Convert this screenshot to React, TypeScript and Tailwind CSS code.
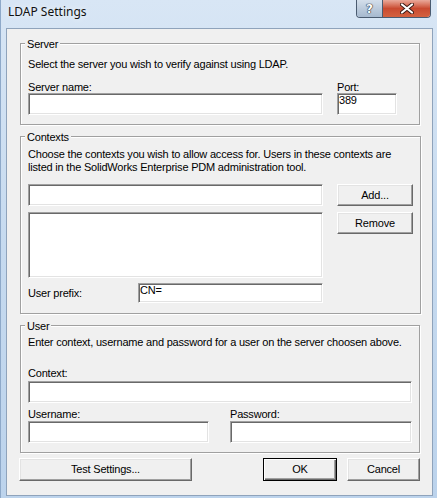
import React from "react";

// classic sunken edit / list box
const Field = ({
	className = "",
	children,
}: {
	className?: string;
	children?: React.ReactNode;
}) => (
	<div
		className={`bg-white border border-[#a0a0a0] border-r-white border-b-white shadow-[inset_1px_1px_0_#696969,inset_-1px_-1px_0_#e3e3e3] pl-[1px] pt-[1px] leading-[11px] ${className}`}
	>
		{children}
	</div>
);

// classic raised push button
const Btn = ({
	className = "",
	isDefault = false,
	children,
}: {
	className?: string;
	isDefault?: boolean;
	children: React.ReactNode;
}) => (
	<button
		type="button"
		className={`flex items-center justify-center bg-[#f0f0f0] ${
			isDefault
				? "border border-black shadow-[inset_1px_1px_0_#fff,inset_-1px_-1px_0_#696969,inset_-2px_-2px_0_#a0a0a0]"
				: "border border-white border-r-[#696969] border-b-[#696969] shadow-[inset_-1px_-1px_0_#a0a0a0,inset_1px_1px_0_#e3e3e3]"
		} ${className}`}
	>
		{children}
	</button>
);

const Group = ({
	title,
	className = "",
	children,
}: {
	title: string;
	className?: string;
	children: React.ReactNode;
}) => (
	<fieldset
		className={`ml-[13px] w-[400px] border border-[#a0a0a0] px-[7px] shadow-[inset_1px_1px_0_#fff,1px_1px_0_#fff] ${className}`}
	>
		<legend className="-ml-[3px] px-[2px] pt-[2px] leading-[13px] bg-[#f0f0f0]">
			{title}
		</legend>
		{children}
	</fieldset>
);

const App = () => {
	return (
		<div className="w-[437px] h-[498px] overflow-hidden bg-gradient-to-b from-[#d8e6f5] via-[#c6daef] to-[#bcd3ec] border-l border-[#8ea9c9]">
			{/* title bar */}
			<div className="h-[28px] flex items-start justify-between pl-[7px] pr-[6px]">
				<span className="mt-[4px] font-['Noto_Sans','Open_Sans',sans-serif] text-[12px] leading-[16px] text-[#111] [text-shadow:0_0_6px_#fff]">
					LDAP Settings
				</span>
				<div className="flex h-[18px] border border-t-0 border-[#4a5b70] rounded-b-[4px] overflow-hidden">
					<div className="w-[26px] flex items-center justify-center bg-gradient-to-b from-[#d4dfeb] via-[#bccbdc] to-[#a6b9cf] border-r border-[#4a5b70]">
						<span className="font-['DejaVu_Sans',sans-serif] font-bold text-[12px] leading-[12px] text-white [text-shadow:0_0_1px_#1f2a38,0_0_1px_#1f2a38,0_0_1px_#1f2a38]">
							?
						</span>
					</div>
					<div className="w-[47px] flex items-center justify-center bg-gradient-to-b from-[#e9a99a] via-[#c94a30] to-[#d4613f]">
						<svg width="14" height="11" viewBox="0 0 14 11">
							<path
								d="M2 1.5 L12 9.5 M12 1.5 L2 9.5"
								stroke="#3b1a14"
								strokeWidth="4"
								strokeLinecap="round"
							/>
							<path
								d="M2 1.5 L12 9.5 M12 1.5 L2 9.5"
								stroke="#fff"
								strokeWidth="2.2"
								strokeLinecap="round"
							/>
						</svg>
					</div>
				</div>
			</div>

			{/* client area */}
			<div className="ml-[5px] w-[427px] h-[468px] border border-[#8fa3bb] bg-[#f0f0f0] flex flex-col font-['Liberation_Sans',Arial,sans-serif] text-[11px] leading-[13px] tracking-[-0.2px] text-black">
				<Group title="Server" className="mt-[7px] pb-[9px]">
					<p className="mt-[7px] whitespace-nowrap">
						Select the server you wish to verify against using
						LDAP.
					</p>
					<div className="mt-[10px] flex gap-[14px]">
						<div className="w-[295px]">
							<div className="h-[12px]">Server name:</div>
							<Field className="h-[22px]" />
						</div>
						<div className="w-[60px]">
							<div className="h-[12px]">Port:</div>
							<Field className="h-[22px]">389</Field>
						</div>
					</div>
				</Group>

				<Group title="Contexts" className="mt-[4px] pb-[10px]">
					<p className="mt-[4px] whitespace-nowrap">
						Choose the contexts you wish to allow access for. Users
						in these contexts are
						<br />
						listed in the SolidWorks Enterprise PDM administration
						tool.
					</p>
					<div className="mt-[10px] flex gap-[14px]">
						<div className="w-[295px] flex flex-col gap-[6px]">
							<Field className="h-[22px]" />
							<Field className="h-[66px]" />
						</div>
						<div className="w-[76px] flex flex-col gap-[6px]">
							<Btn className="h-[22px]">Add...</Btn>
							<Btn className="h-[22px]">Remove</Btn>
						</div>
					</div>
					<div className="mt-[5px] flex items-center">
						<span className="w-[110px]">User prefix:</span>
						<Field className="w-[185px] h-[20px]">CN=</Field>
					</div>
				</Group>

				<Group title="User" className="mt-[4px] pb-[9px]">
					<p className="mt-[3px] whitespace-nowrap">
						Enter context, username and password for a user on the
						server choosen above.
					</p>
					<div className="mt-[18px] h-[14px]">Context:</div>
					<Field className="h-[22px]" />
					<div className="mt-[5px] flex gap-[21px]">
						<div className="w-[181px]">
							<div className="h-[13px]">Username:</div>
							<Field className="h-[22px]" />
						</div>
						<div className="w-[182px]">
							<div className="h-[13px]">Password:</div>
							<Field className="h-[22px]" />
						</div>
					</div>
				</Group>

				<div className="mt-[5px] flex px-[12px]">
					<Btn className="w-[173px] h-[23px]">Test Settings...</Btn>
					<div className="flex-1" />
					<Btn isDefault className="w-[74px] h-[23px]">
						OK
					</Btn>
					<Btn className="ml-[10px] w-[73px] h-[23px]">Cancel</Btn>
				</div>
			</div>
		</div>
	);
};

export default App;
